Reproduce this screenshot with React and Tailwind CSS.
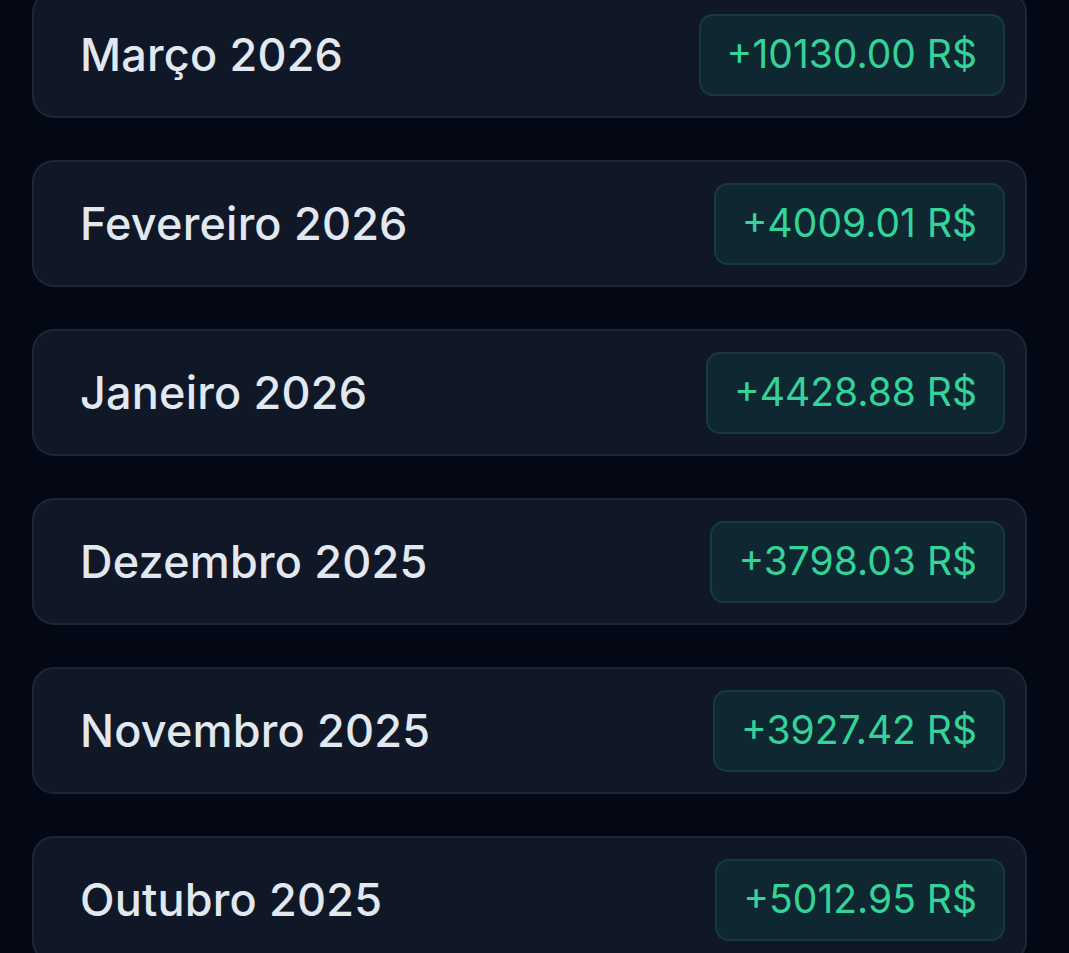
const months = [
  { label: 'Março 2026', amount: '+10130.00 R$' },
  { label: 'Fevereiro 2026', amount: '+4009.01 R$' },
  { label: 'Janeiro 2026', amount: '+4428.88 R$' },
  { label: 'Dezembro 2025', amount: '+3798.03 R$' },
  { label: 'Novembro 2025', amount: '+3927.42 R$' },
  { label: 'Outubro 2025', amount: '+5012.95 R$' },
]

export default function App() {
  return (
    <div
      className="h-[953px] overflow-hidden bg-[#040814] px-[32px] pr-[42px]"
      style={{ fontFamily: 'Inter, "Open Sans", sans-serif' }}
    >
      <div className="mt-[-9px] flex flex-col gap-[42px]">
        {months.map((m) => (
          <div
            key={m.label}
            className="flex h-[127px] items-center justify-between rounded-[22px] border-2 border-[#1d2638] bg-[#101828] pl-[46px] pr-[20px]"
          >
            <span className="text-[45px] font-medium tracking-[0.2px] text-[#e2e8f0]">{m.label}</span>
            <span className="flex h-[82px] items-center rounded-[14px] border-2 border-[#173a3a] bg-[#0f2730] px-[26px] text-[39px] font-normal text-[#34d399]">
              {m.amount}
            </span>
          </div>
        ))}
      </div>
    </div>
  )
}
